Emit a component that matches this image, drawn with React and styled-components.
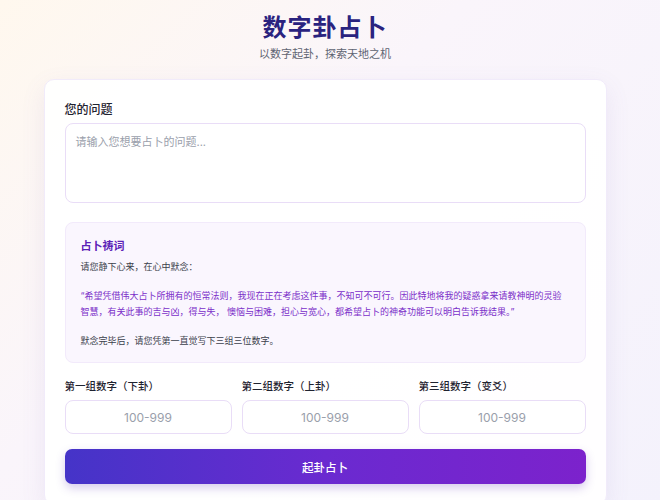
import React from "react";
import styled, { createGlobalStyle } from "styled-components";

const Global = createGlobalStyle`
  html, body { margin: 0; padding: 0; }
  body {
    font-family: Inter, "Noto Sans CJK SC", sans-serif;
    background: linear-gradient(135deg, #fff8ee 0%, #faf5fb 40%, #f4f2fc 100%);
    min-height: 500px;
    overflow: hidden;
  }
`;

const Page = styled.div`
  width: 650px;
  padding-top: 13px;
  display: flex;
  flex-direction: column;
  align-items: center;
`;

const Title = styled.h1`
  margin: 0;
  font-size: 24px;
  line-height: 30px;
  font-weight: 700;
  color: #2a237f;
  letter-spacing: 1px;
`;

const Subtitle = styled.p`
  margin: 2px 0 0;
  font-size: 11px;
  color: #5f6472;
`;

const Card = styled.div`
  margin-top: 18px;
  width: 563px;
  box-sizing: border-box;
  background: rgba(255, 255, 255, 0.92);
  border: 1px solid #f1ebfa;
  border-radius: 10px;
  box-shadow: 0 8px 24px rgba(120, 100, 180, 0.1);
  padding: 20px 20px 20px;
  display: flex;
  flex-direction: column;
`;

const Label = styled.label`
  font-size: ${(p) => (p.small ? "10.5px" : "12px")};
  font-weight: 500;
  color: #1f2330;
  margin-bottom: ${(p) => (p.small ? "7px" : "6px")};
  display: block;
`;

const TextArea = styled.textarea`
  height: 80px;
  box-sizing: border-box;
  border: 1px solid #e9ddf7;
  border-radius: 8px;
  padding: 9px 10px;
  font-family: inherit;
  font-size: 11px;
  resize: none;
  outline: none;
  &::placeholder { color: #9aa0ab; }
`;

const Prayer = styled.div`
  margin-top: 19px;
  background: #faf6fe;
  border: 1px solid #f2eafb;
  border-radius: 8px;
  padding: 15px 15px 13px;
  font-size: 9px;
  line-height: 16px;
  color: #3a3f4b;
`;

const PrayerTitle = styled.div`
  font-size: 11px;
  font-weight: 700;
  color: #5b21b6;
  margin-bottom: 5px;
`;

const Para = styled.p`
  margin: 0 0 ${(p) => p.gap || 0}px;
  color: ${(p) => (p.accent ? "#7a2fc9" : "#3a3f4b")};
`;

const Grid = styled.div`
  margin-top: 15px;
  display: grid;
  grid-template-columns: repeat(3, minmax(0, 1fr));
  gap: 10px;
`;

const Field = styled.div`
  display: flex;
  flex-direction: column;
  min-width: 0;
`;

const NumInput = styled.input`
  width: 100%;
  height: 34px;
  box-sizing: border-box;
  border: 1px solid #e9ddf7;
  border-radius: 8px;
  text-align: center;
  font-family: inherit;
  font-size: 12px;
  outline: none;
  &::placeholder { color: #9aa0ab; }
`;

const Button = styled.button`
  margin-top: 15px;
  height: 35px;
  border: none;
  border-radius: 7px;
  background: linear-gradient(90deg, #4534c8 0%, #6a2ad0 50%, #7c22cc 100%);
  color: #fff;
  font-family: inherit;
  font-size: 11.5px;
  font-weight: 500;
  box-shadow: 0 4px 10px rgba(90, 50, 180, 0.25);
`;

export default function App() {
  const groups = ["第一组数字（下卦）", "第二组数字（上卦）", "第三组数字（变爻）"];
  return (
    <Page>
      <Global />
      <Title>数字卦占卜</Title>
      <Subtitle>以数字起卦，探索天地之机</Subtitle>
      <Card>
        <Label>您的问题</Label>
        <TextArea placeholder="请输入您想要占卜的问题..." />
        <Prayer>
          <PrayerTitle>占卜祷词</PrayerTitle>
          <Para gap={13}>请您静下心来，在心中默念：</Para>
          <Para accent gap={13}>
            “希望凭借伟大占卜所拥有的恒常法则，我现在正在考虑这件事，不知可不可行。因此特地将我的疑惑拿来请教神明的灵验智慧，有关此事的吉与凶，得与失， 懊恼与困难，担心与宽心，都希望占卜的神奇功能可以明白告诉我结果。”
          </Para>
          <Para>默念完毕后，请您凭第一直觉写下三组三位数字。</Para>
        </Prayer>
        <Grid>
          {groups.map((g) => (
            <Field key={g}>
              <Label small>{g}</Label>
              <NumInput placeholder="100-999" />
            </Field>
          ))}
        </Grid>
        <Button>起卦占卜</Button>
      </Card>
    </Page>
  );
}
